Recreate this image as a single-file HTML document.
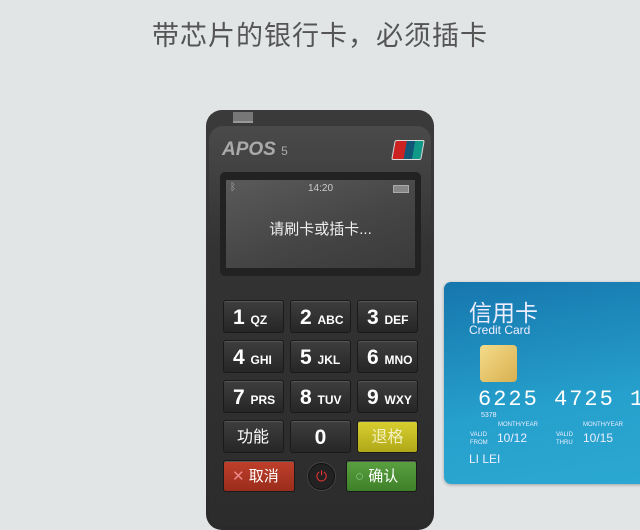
<!DOCTYPE html>
<html><head><meta charset="utf-8"><style>
body{margin:0;width:640px;height:500px;overflow:hidden;background:#e2e5e6;font-family:"Liberation Sans","Noto Sans CJK SC",sans-serif;position:relative}
.t{position:absolute;top:14px;left:0;width:640px;text-align:center;font-size:27px;color:#555;letter-spacing:1px}
.dev{position:absolute;left:206px;top:110px;width:228px;height:420px;border-radius:16px;background:linear-gradient(#3a3a3a,#2a2a2a)}
.face{position:absolute;left:3px;top:16px;width:222px;height:400px;border-radius:14px;background:linear-gradient(#4a4a4a,#333 30%,#2c2c2c)}
.slot{position:absolute;left:27px;top:2px;width:20px;height:9px;background:#777;border-bottom:2px solid #999}
.apos{position:absolute;left:13px;top:13px;color:#aaa;font-style:italic;font-weight:bold;font-size:19px}
.apos span{font-style:normal;font-weight:normal;font-size:12px}
.up{position:absolute;left:184px;top:14px;width:28px;height:18px;background:linear-gradient(90deg,#c22 0 40%,#157 40% 70%,#198 70%);transform:skewX(-10deg);border:1px solid #ddd;border-radius:2px}
.scr{position:absolute;left:11px;top:46px;width:201px;height:104px;background:#222;border-radius:5px}
.lcd{position:absolute;left:6px;top:8px;width:189px;height:88px;background:linear-gradient(160deg,#5a5a5a,#444 60%,#3a3a3a);color:#eee}
.k{position:absolute;width:61px;height:33px;border-radius:3px;background:linear-gradient(#3e3e3e,#262626);border:1px solid #1a1a1a;box-shadow:inset 0 1px #555;color:#fff;font-weight:bold;font-size:21px;line-height:33px;box-sizing:border-box;padding-left:9px}
.k small{font-size:12px}
.card{position:absolute;left:444px;top:282px;width:210px;height:202px;border-radius:7px;background:linear-gradient(170deg,#1676ad,#26a0cc 60%,#2ba8d2);box-shadow:0 1px 3px rgba(0,0,0,.3);color:#eef}
</style></head><body>
<div class="t">带芯片的银行卡，必须插卡</div>
<div class="dev"><div class="slot"></div>
<div class="face">
<div class="apos">APOS <span>5</span></div>
<div class="up"></div>
<div class="scr"><div class="lcd">
<div style="position:absolute;left:0;top:3px;width:100%;text-align:center;font-size:10px;color:#ccc">14:20</div>
<div style="position:absolute;left:4px;top:2px;font-size:10px;color:#aaa">ᛒ</div>
<div style="position:absolute;right:6px;top:5px;width:14px;height:6px;border:1px solid #aaa;background:#888"></div>
<div style="position:absolute;left:0;top:38px;width:100%;text-align:center;font-size:15px">请刷卡或插卡...</div>
</div></div>
</div></div>
<div class="k" style="left:223px;top:300px">1 <small>QZ</small></div>
<div class="k" style="left:290px;top:300px">2 <small>ABC</small></div>
<div class="k" style="left:357px;top:300px">3 <small>DEF</small></div>
<div class="k" style="left:223px;top:340px">4 <small>GHI</small></div>
<div class="k" style="left:290px;top:340px">5 <small>JKL</small></div>
<div class="k" style="left:357px;top:340px">6 <small>MNO</small></div>
<div class="k" style="left:223px;top:380px">7 <small>PRS</small></div>
<div class="k" style="left:290px;top:380px">8 <small>TUV</small></div>
<div class="k" style="left:357px;top:380px">9 <small>WXY</small></div>
<div class="k" style="left:223px;top:420px;font-size:16px;font-weight:normal;padding-left:13px">功能</div>
<div class="k" style="left:290px;top:420px;text-align:center;padding:0">0</div>
<div class="k" style="left:357px;top:420px;background:linear-gradient(#d8d030,#b0a818);text-align:center;padding:0;font-size:16px;font-weight:normal;color:#f4f0c0">退格</div>
<div class="k" style="left:223px;top:460px;width:72px;height:32px;line-height:32px;background:linear-gradient(#c0402c,#9a2c1c);font-size:15px;font-weight:normal;padding-left:8px"><span style="color:#e88">✕</span> 取消</div>
<div style="position:absolute;left:308px;top:463px;width:25px;height:25px;border-radius:50%;background:#222;border:1px solid #111;box-shadow:0 0 0 1px #444;color:#e33;text-align:center;line-height:25px;font-size:14px">⏻</div>
<div class="k" style="left:346px;top:460px;width:71px;height:32px;line-height:32px;background:linear-gradient(#5aa040,#3e8028);font-size:15px;font-weight:normal;padding-left:8px"><span style="color:#8c8">○</span> 确认</div>
<div class="card">
<div style="position:absolute;left:25px;top:12px;font-size:23px">信用卡</div>
<div style="position:absolute;left:25px;top:41px;font-size:12px">Credit Card</div>
<div style="position:absolute;left:36px;top:63px;width:37px;height:37px;border-radius:4px;background:linear-gradient(135deg,#f4dc8a,#d8b050)"></div>
<div style="position:absolute;left:34px;top:105px;font-size:22px;letter-spacing:2px;white-space:nowrap;color:#fff;font-family:'Liberation Mono',monospace">6225 4725 18</div>
<div style="position:absolute;left:37px;top:130px;font-size:7px">5378</div>
<div style="position:absolute;left:54px;top:140px;font-size:6px">MONTH/YEAR</div>
<div style="position:absolute;left:139px;top:140px;font-size:6px">MONTH/YEAR</div>
<div style="position:absolute;left:26px;top:149px;font-size:6px;line-height:8px">VALID<br>FROM</div>
<div style="position:absolute;left:112px;top:149px;font-size:6px;line-height:8px">VALID<br>THRU</div>
<div style="position:absolute;left:53px;top:149px;font-size:12px">10/12</div>
<div style="position:absolute;left:139px;top:149px;font-size:12px">10/15</div>
<div style="position:absolute;left:25px;top:170px;font-size:12px">LI LEI</div>
</div>
</body></html>
